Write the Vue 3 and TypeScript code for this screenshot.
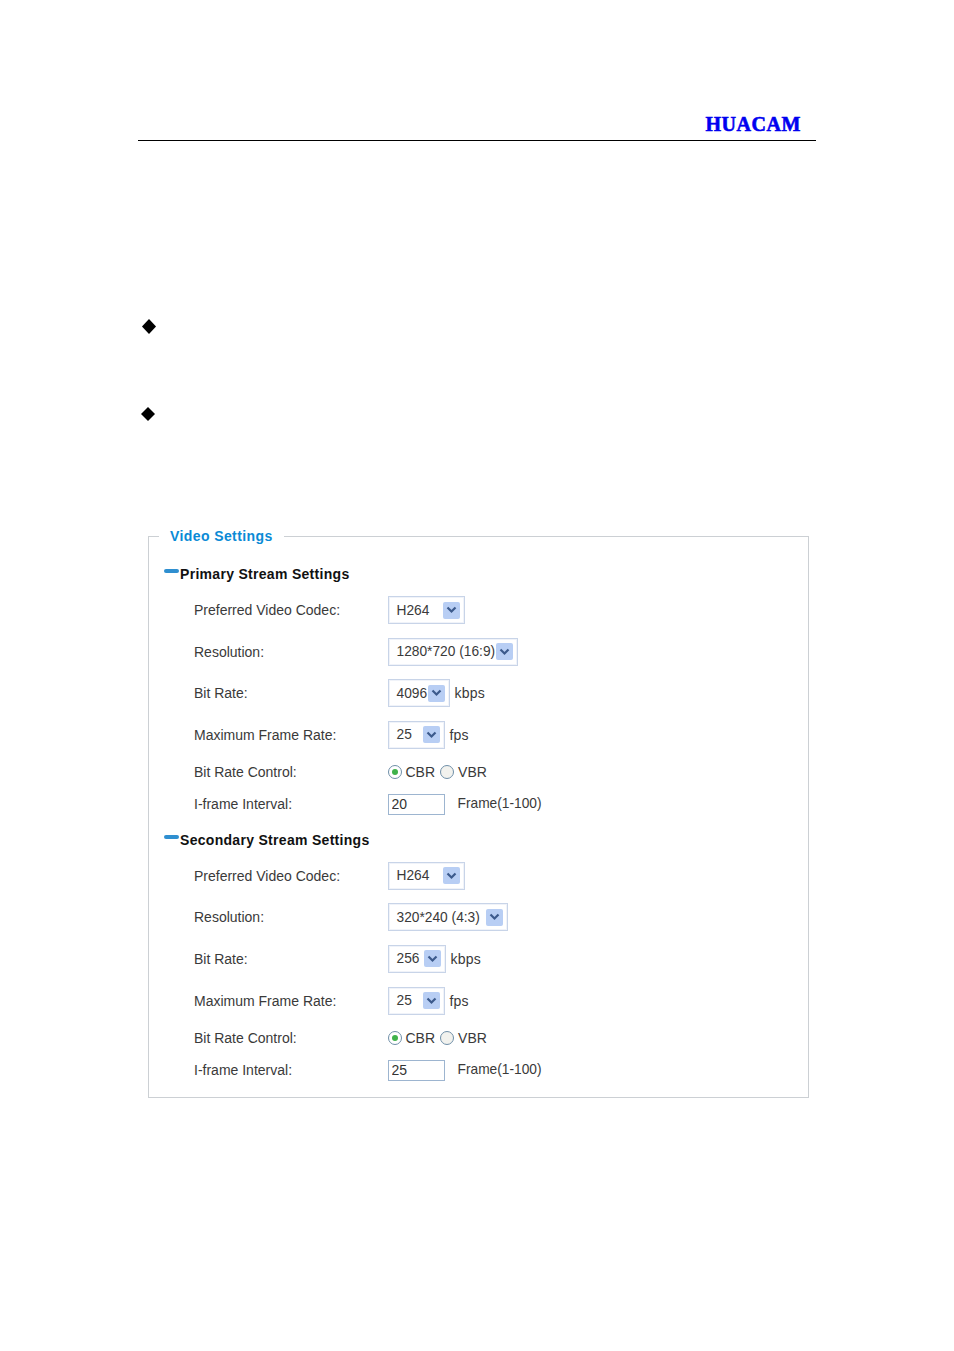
<script setup lang="ts">
interface Row {
  label: string
  kind: 'select' | 'radio' | 'input'
  value?: string
  width?: number
  unit?: string
}
const sections: { title: string; rows: Row[] }[] = [
  {
    title: 'Primary Stream Settings',
    rows: [
      { label: 'Preferred Video Codec:', kind: 'select', value: 'H264', width: 77 },
      { label: 'Resolution:', kind: 'select', value: '1280*720 (16:9)', width: 130 },
      { label: 'Bit Rate:', kind: 'select', value: '4096', width: 62, unit: 'kbps' },
      { label: 'Maximum Frame Rate:', kind: 'select', value: '25', width: 57, unit: 'fps' },
      { label: 'Bit Rate Control:', kind: 'radio' },
      { label: 'I-frame Interval:', kind: 'input', value: '20' },
    ],
  },
  {
    title: 'Secondary Stream Settings',
    rows: [
      { label: 'Preferred Video Codec:', kind: 'select', value: 'H264', width: 77 },
      { label: 'Resolution:', kind: 'select', value: '320*240 (4:3)', width: 120 },
      { label: 'Bit Rate:', kind: 'select', value: '256', width: 58, unit: 'kbps' },
      { label: 'Maximum Frame Rate:', kind: 'select', value: '25', width: 57, unit: 'fps' },
      { label: 'Bit Rate Control:', kind: 'radio' },
      { label: 'I-frame Interval:', kind: 'input', value: '25' },
    ],
  },
]
</script>

<template>
  <div class="page">
    <header class="header"><span class="brand">HUACAM</span></header>

    <div class="bullets">
      <svg class="bullet" width="14" height="15" viewBox="0 0 14 15"><path d="M7 0 14 7.5 7 15 0 7.5Z" fill="#000" /></svg>
      <svg class="bullet second" width="14" height="14" viewBox="0 0 14 14"><path d="M7 0 14 7 7 14 0 7Z" fill="#000" /></svg>
    </div>

    <fieldset class="panel">
      <legend class="legend">Video Settings</legend>
      <section v-for="s in sections" :key="s.title" class="section">
        <h3 class="heading"><span class="minus"></span>{{ s.title }}</h3>
        <div v-for="r in s.rows" :key="r.label" class="row" :class="'row-' + r.kind">
          <span class="label">{{ r.label }}</span>
          <div class="control">
            <template v-if="r.kind === 'select'">
              <div class="select" :style="{ width: r.width + 'px' }">
                <span>{{ r.value }}</span>
                <span class="arrow">
                  <svg width="11" height="8" viewBox="0 0 11 8"><path d="M1.5 1.5 5.5 5.5 9.5 1.5" fill="none" stroke="#3c5a8c" stroke-width="2.2" /></svg>
                </span>
              </div>
              <span v-if="r.unit" class="unit">{{ r.unit }}</span>
            </template>
            <template v-else-if="r.kind === 'radio'">
              <span class="radio on"><i></i></span><span class="radio-text">CBR</span>
              <span class="radio"></span><span class="radio-text">VBR</span>
            </template>
            <template v-else>
              <input class="field" type="text" :value="r.value" />
              <span class="frame">Frame(1-100)</span>
            </template>
          </div>
        </div>
      </section>
    </fieldset>
  </div>
</template>

<style scoped>
.page {
  width: 954px;
  height: 1351px;
  background: #fff;
  overflow: hidden;
  font-family: "Liberation Sans", Arial, sans-serif;
  font-size: 14px;
  color: #3a3a3a;
}
.header {
  margin: 0 138px;
  height: 141px;
  box-sizing: border-box;
  border-bottom: 1px solid #000;
  display: flex;
  justify-content: flex-end;
  align-items: flex-end;
  padding: 0 15px 4px 0;
}
.brand {
  font-family: "Liberation Serif", serif;
  font-weight: 700;
  font-size: 20px;
  line-height: 24px;
  letter-spacing: 0.55px;
  color: #0000f0;
  -webkit-text-stroke: 0.6px #0000f0;
}
.bullets {
  padding: 178px 0 0 142px;
  height: 208px;
  box-sizing: border-box;
  display: flex;
  flex-direction: column;
  align-items: flex-start;
}
.bullet { display: block; flex: none; }
.bullet.second { margin-top: 73px; margin-left: -1px; }
.panel {
  margin: 177px 0 0 148px;
  width: 661px;
  height: 572px;
  box-sizing: border-box;
  border: 1px solid #ccd0d4;
  padding: 18px 0 0;
  min-width: 0;
}
.legend {
  margin-left: 10px;
  padding: 0 11px;
  font-weight: 700;
  font-size: 14px;
  line-height: 20px;
  color: #0a8ad6;
  letter-spacing: 0.4px;
}
.section { display: flex; flex-direction: column; }
.section + .section { margin-top: 15.7px; }
.heading {
  margin: 0 0 12px;
  height: 20px;
  display: flex;
  align-items: center;
  padding-left: 15px;
  font-size: 14px;
  line-height: 20px;
  font-weight: 700;
  color: #111;
  letter-spacing: 0.3px;
}
.minus {
  width: 15px;
  height: 4px;
  margin: -6px 1px 0 0;
  border-radius: 2px;
  background: #2f8fd0;
}
.row {
  display: grid;
  grid-template-columns: 193.5px 1fr;
  align-items: center;
  padding-left: 45px;
  height: 28px;
  margin-bottom: 13.67px;
}
.row-radio { height: 20px; margin-top: -0.67px; margin-bottom: 12px; }
.row-input { height: 20px; margin-bottom: 0; }
.control { display: flex; align-items: center; }
.select {
  height: 28px;
  box-sizing: border-box;
  border: 1px solid #c8d4e8;
  box-shadow: inset 0 0 0 1px #f0f3f9;
  display: flex;
  align-items: center;
  justify-content: space-between;
  padding: 0 4px 0 8px;
  font-size: 13.75px;
  white-space: nowrap;
}
.arrow {
  width: 17px;
  height: 17px;
  flex: none;
  display: flex;
  align-items: center;
  justify-content: center;
  border-radius: 2px;
  background: #b8cef4;
}
.unit { margin-left: 5px; letter-spacing: 0.2px; }
.radio {
  width: 14px;
  height: 14px;
  box-sizing: border-box;
  border: 1.5px solid #6f8fa8;
  border-radius: 50%;
  background: #f2f2ee;
  display: flex;
  align-items: center;
  justify-content: center;
}
.radio.on { background: #fff; }
.radio i {
  width: 6px;
  height: 6px;
  border-radius: 50%;
  background: #3fb24a;
}
.radio-text { margin: 0 5px 0 4px; }
.field {
  width: 57px;
  height: 21px;
  box-sizing: border-box;
  border: 1px solid #9db5d0;
  padding: 0 3px;
  font: inherit;
  color: #333;
  outline: none;
}
.frame { margin: -2px 0 0 13px; font-size: 13.75px; }
</style>
